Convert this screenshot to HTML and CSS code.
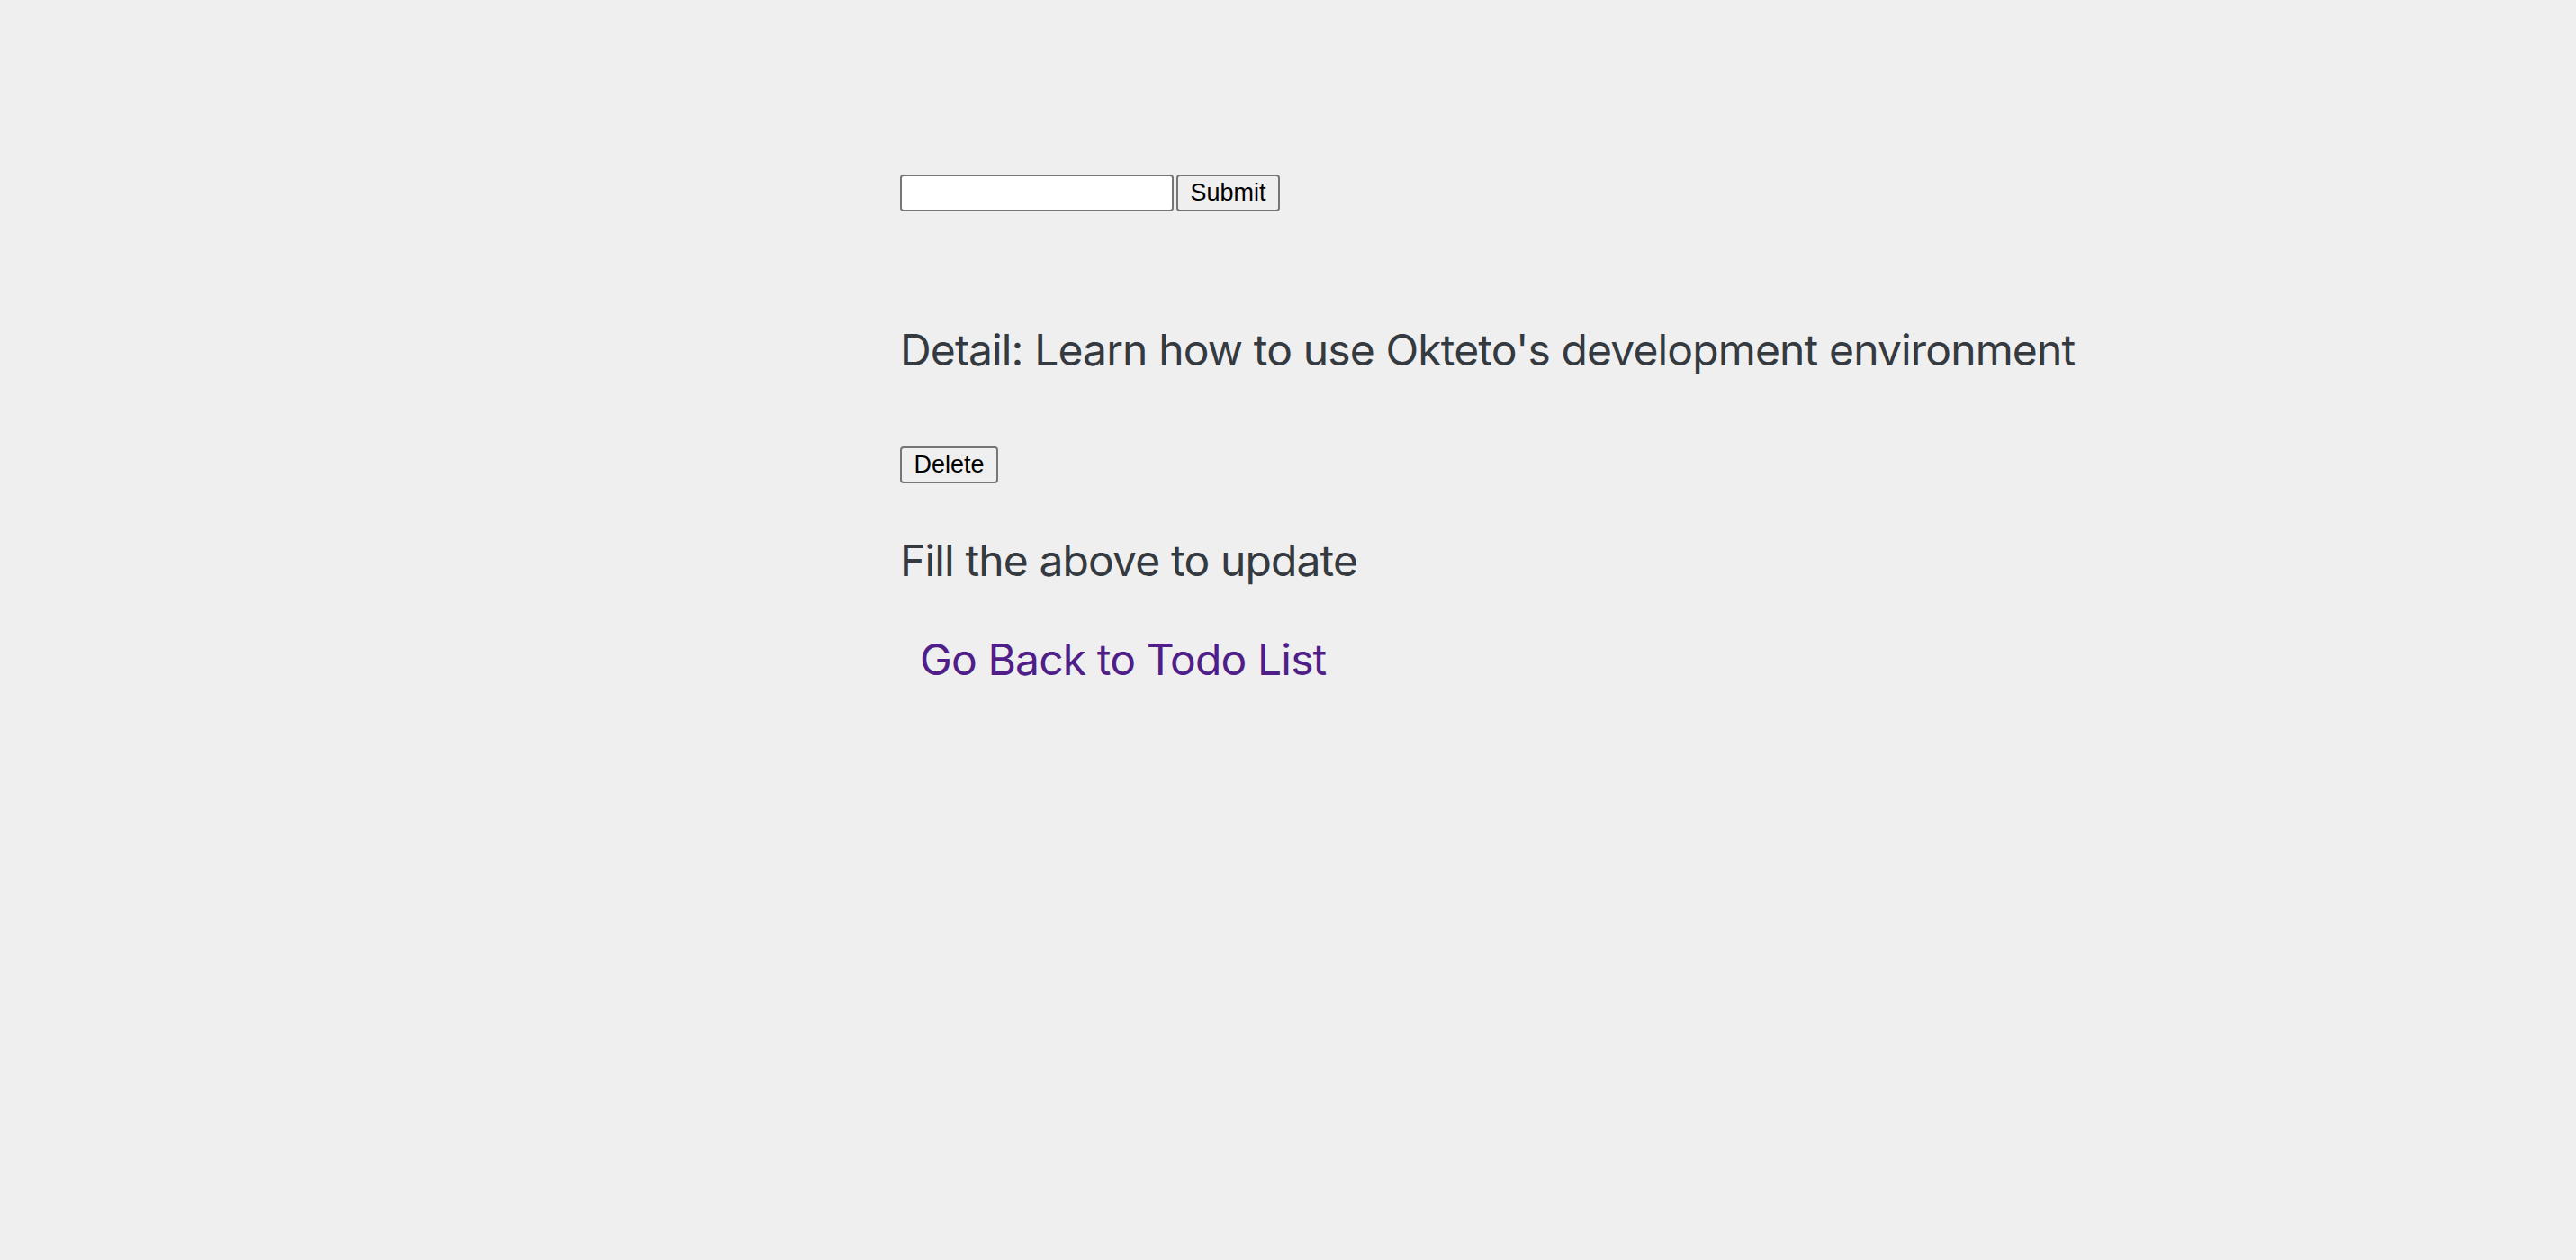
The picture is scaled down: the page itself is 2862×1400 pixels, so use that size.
FILE: index.html
```html
<!DOCTYPE html>
<html lang="en">
<head>
<meta charset="utf-8">
<title>Todo Detail</title>
<link rel="stylesheet" href="styles.css">
</head>
<body>
<main class="page">
  <form class="update-form">
    <input class="text-input" type="text" name="title">
    <button class="btn" type="submit">Submit</button>
  </form>
  <h2 class="detail">Detail: Learn how to use Okteto's development environment</h2>
  <div class="delete-row">
    <button class="btn" type="button">Delete</button>
  </div>
  <h2 class="fill">Fill the above to update</h2>
  <div class="back">
    <a class="back-link" href="#">Go Back to Todo List</a>
  </div>
</main>
</body>
</html>
```

FILE: styles.css
```css
html, body {
  margin: 0;
  padding: 0;
  background: #efefef;
}

body {
  font-family: Inter, "Noto Sans", sans-serif;
  color: #343a40;
}

.page {
  display: flex;
  flex-direction: column;
  align-items: flex-start;
  padding: 194px 0 0 1000px;
}

.update-form {
  display: flex;
  gap: 3px;
  margin: 0;
  height: 41px;
}

.text-input {
  box-sizing: border-box;
  width: 304px;
  height: 41px;
  margin: 0;
  padding: 2px 4px;
  border: 2px solid #767676;
  border-radius: 4px;
  background: #ffffff;
  font-family: "Liberation Sans", Arial, sans-serif;
  font-size: 26px;
}

.btn {
  box-sizing: border-box;
  height: 41px;
  margin: 0;
  padding: 0 13.5px;
  border: 2px solid #767676;
  border-radius: 4px;
  background: #efefef;
  color: #000000;
  font-family: "Liberation Sans", Arial, sans-serif;
  font-size: 27px;
  line-height: 1;
  display: flex;
  align-items: center;
}

.detail,
.fill {
  margin: 0;
  font-weight: 400;
  font-size: 48px;
  line-height: 58px;
  letter-spacing: -0.018em;
  color: #343a40;
  white-space: nowrap;
}

.detail {
  margin-top: 125px;
}

.delete-row {
  margin-top: 78px;
  display: flex;
}

.fill {
  margin-top: 57px;
}

.back {
  margin-top: 52px;
  padding-left: 22px;
  font-size: 48px;
  line-height: 58px;
  letter-spacing: -0.018em;
}

.back-link {
  color: #4f1e88;
  text-decoration: none;
}
```
